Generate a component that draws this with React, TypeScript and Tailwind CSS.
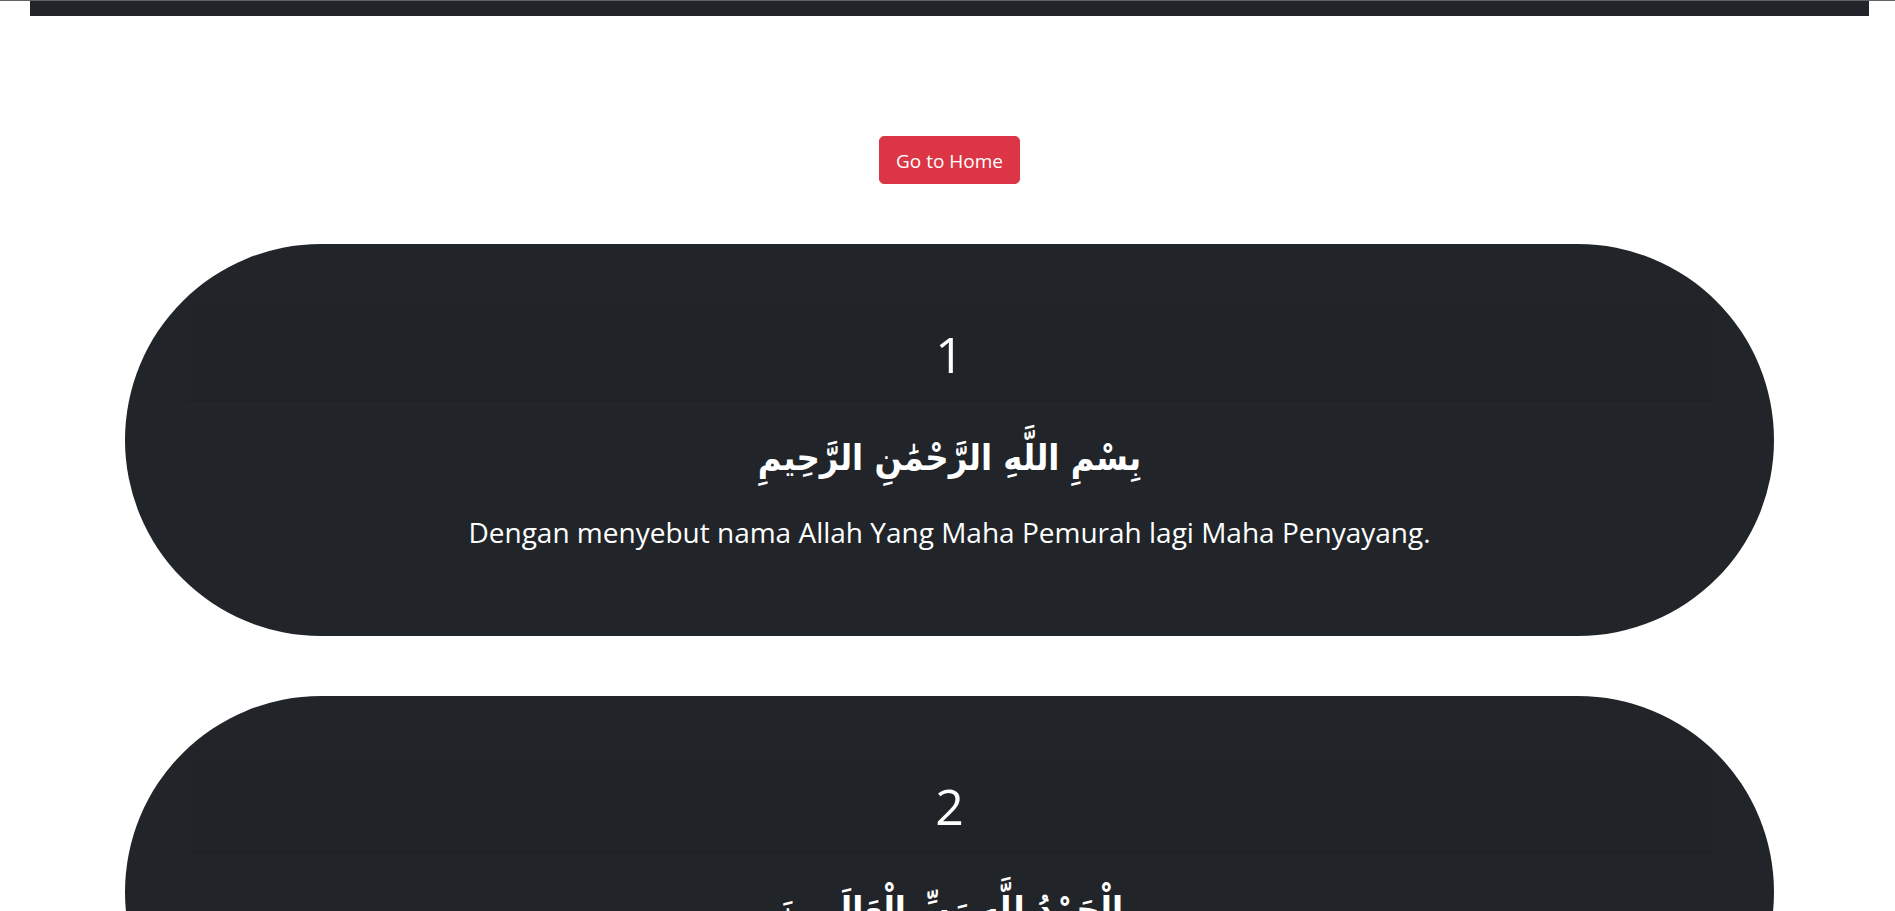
type Verse = { number: number; arabic: string; translation: string };

const verses: Verse[] = [
  {
    number: 1,
    arabic: "بِسْمِ اللَّهِ الرَّحْمَٰنِ الرَّحِيمِ",
    translation: "Dengan menyebut nama Allah Yang Maha Pemurah lagi Maha Penyayang.",
  },
  {
    number: 2,
    arabic: "الْحَمْدُ لِلَّهِ رَبِّ الْعَالَمِينَ",
    translation: "Segala puji bagi Allah, Tuhan semesta alam.",
  },
];

function VerseCard({ number, arabic, translation }: Verse) {
  return (
    <article className="rounded-[200px] bg-[#212529] p-15 text-center text-white">
      <header className="border-b border-[#1d2024] bg-[#202428] px-4 pt-[10px] pb-[6px]">
        <h2 className="text-[50px] leading-[80px]">{number}</h2>
      </header>
      <div className="flex flex-col gap-2 p-4">
        <p
          lang="ar"
          dir="rtl"
          className="font-['DejaVu_Sans_Condensed','DejaVu_Sans',sans-serif] text-[36px] leading-[82px] font-bold"
        >
          {arabic}
        </p>
        <p className="pb-[2px] text-[28px] leading-[51px]">{translation}</p>
      </div>
    </article>
  );
}

export default function App() {
  return (
    <div className="h-screen overflow-hidden border-t border-[#5f6368] bg-white pr-[26px] pl-[30px] font-['Open_Sans','Noto_Sans',sans-serif]">
      <div className="h-[15px] bg-[#212529]" />
      <main className="flex flex-col gap-15 px-[95px] pt-30">
        <a
          href="#home"
          className="self-center rounded-[5px] border border-[#dc3545] bg-[#dc3545] px-4 pt-[9px] pb-[7px] text-[19px] leading-[30px] text-white"
        >
          Go to Home
        </a>
        {verses.map((verse) => (
          <VerseCard key={verse.number} {...verse} />
        ))}
      </main>
    </div>
  );
}
